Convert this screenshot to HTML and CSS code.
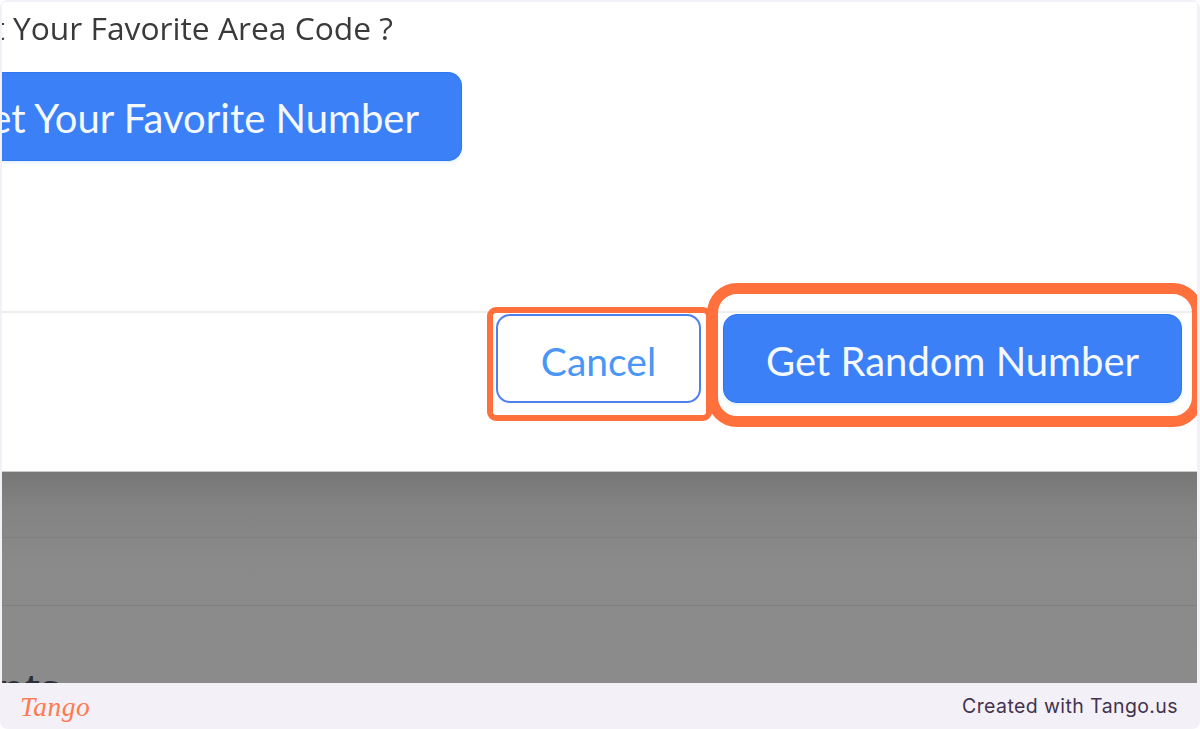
FILE: index.html
```html
<!DOCTYPE html>
<html lang="en">
<head>
<meta charset="utf-8">
<title>Get Random Number</title>
<link rel="stylesheet" href="styles.css">
</head>
<body>
<div class="page">
  <main class="frame">
    <section class="modal">
      <div class="modal-body">
        <p class="question">Select Your Favorite Area Code ?</p>
        <button class="btn btn-primary btn-favorite">Get Your Favorite Number</button>
      </div>
      <div class="modal-footer">
        <button class="btn btn-outline">Cancel</button>
        <button class="btn btn-primary btn-random">Get Random Number</button>
      </div>
    </section>
    <section class="backdrop">
      <div class="row row-a"></div>
      <div class="row row-b"></div>
      <h2 class="behind">nts</h2>
    </section>
    <div class="mark mark-cancel"></div>
    <div class="mark mark-random"></div>
  </main>
  <footer class="bar">
    <span class="logo">Tango</span>
    <span class="credit">Created with Tango.us</span>
  </footer>
</div>
</body>
</html>
```
FILE: styles.css
```css
* { box-sizing: border-box; }
html, body { margin: 0; height: 100%; background: #fff; }
.page {
  width: 1200px;
  height: 729px;
  display: flex;
  flex-direction: column;
  background: #f3f1f7;
  border-radius: 8px;
  padding: 2px 3px 0 2px;
  overflow: hidden;
}
.frame {
  position: relative;
  height: 681px;
  flex: none;
  overflow: hidden;
  display: flex;
  flex-direction: column;
  background: #fff;
  border-top-left-radius: 4px;
}
.modal { height: 469px; flex: none; display: flex; flex-direction: column; background: #fff; }
.modal-body { height: 309px; flex: none; width: 460px; display: flex; flex-direction: column; align-items: flex-end; }
.question {
  margin: 6px 69px 0 0;
  font: 400 31.75px/40px "Open Sans", "Noto Sans", sans-serif;
  color: #3a3a3a;
  white-space: nowrap;
  filter: blur(0.4px);
}
.btn {
  font: 400 40px/1 "Lato", "Noto Sans", sans-serif;
  height: 89px;
  border-radius: 14px;
  white-space: nowrap;
  flex: none;
  padding: 5px 0 0;
}
.btn-primary { background: #3b80f6; color: #f4f8ff; border: 1px solid #2f78f2; box-shadow: 0 2px 3px #e4f0fd; }
.btn-favorite {
  margin-top: 24px;
  width: 460px;
  display: flex;
  align-items: center;
  justify-content: flex-end;
  padding: 3px 42px 0 0;
  border-radius: 0 14px 14px 0;
  border-left: 0;
}
.btn-outline { background: #fff; color: #4a96f8; border: 2px solid #4f80ee; width: 205px; font-size: 39px; }
.btn-random { width: 459px; }
.modal-footer {
  flex: 1;
  border-top: 2px solid #eee;
  display: flex;
  justify-content: flex-end;
  align-items: flex-start;
  gap: 22px;
  padding: 1px 15px 0 0;
}
.backdrop {
  flex: 1;
  min-height: 0;
  overflow: hidden;
  background: linear-gradient(#777 0, #838383 35px, #8a8a8a 90px, #8b8b8b 100%);
  border-top: 1px solid #c9c9c9;
}
.row { border-bottom: 1px solid #7f7f7f; }
.row-a { height: 66px; }
.row-b { height: 68px; }
.behind {
  margin: 62px 0 0 -3px;
  font: 600 40px/40px "Open Sans", sans-serif;
  color: #2a2f3a;
  white-space: nowrap;
}
.mark { position: absolute; border-style: solid; border-color: #ff703d; background: transparent; }
.mark-cancel { left: 485px; top: 305px; width: 225px; height: 114px; border-width: 6px; border-radius: 9px; }
.mark-random { left: 705px; top: 281px; width: 496px; height: 144px; border-width: 11px; border-radius: 30px; }
.bar {
  flex: 1;
  display: flex;
  align-items: center;
  justify-content: space-between;
  padding: 1px 19px 0 18px;
}
.logo {
  font: italic 400 27.5px/1 "Liberation Serif", serif;
  color: #ff7a50;
  letter-spacing: 0.5px;
}
.credit {
  font: 400 19.5px/1 "Inter", "Lato", sans-serif;
  color: #43324f;
  letter-spacing: 0.4px;
}
```
